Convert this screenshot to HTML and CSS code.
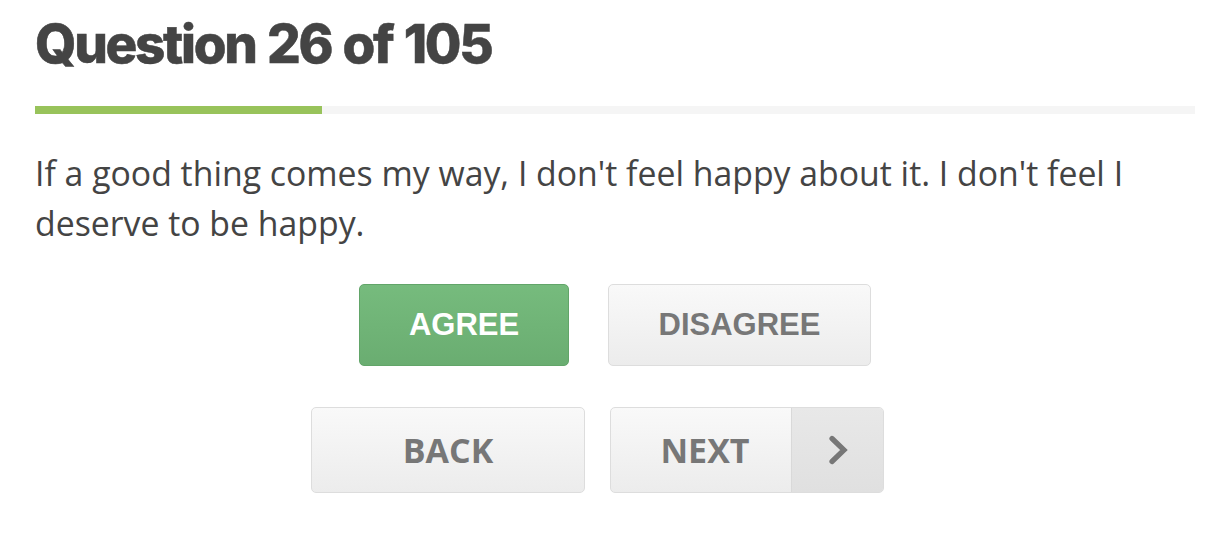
FILE: index.html
```html
<!DOCTYPE html>
<html lang="en">
<head>
<meta charset="utf-8">
<title>Question 26 of 105</title>
<link rel="stylesheet" href="styles.css">
</head>
<body>
<main class="quiz">
  <h1 class="quiz-title">Question 26 of 105</h1>
  <div class="progress"><div class="progress-fill" style="width: 24.7%"></div></div>
  <p class="question">If a good thing comes my way, I don't feel happy about it. I don't feel I deserve to be happy.</p>
  <div class="answers">
    <button class="btn btn-answer btn-agree">AGREE</button>
    <button class="btn btn-answer btn-disagree">DISAGREE</button>
  </div>
  <div class="nav">
    <button class="btn btn-nav btn-back">BACK</button>
    <button class="btn btn-nav btn-next">
      <span class="next-label">NEXT</span>
      <span class="next-icon">
        <svg width="24" height="30" viewBox="0 0 24 30" aria-hidden="true">
          <path d="M6 3.5 L18 15 L6 26.5" fill="none" stroke="#777" stroke-width="5.2" stroke-linecap="round" stroke-linejoin="miter"/>
        </svg>
      </span>
    </button>
  </div>
</main>
</body>
</html>
```

FILE: styles.css
```css
* { box-sizing: border-box; }

body {
  margin: 0;
  background: #ffffff;
  font-family: "Open Sans", "Liberation Sans", sans-serif;
  color: #454545;
}

.quiz {
  width: 1195px;
  padding-left: 35px;
  padding-top: 17px;
}

.quiz-title {
  margin: 0;
  font-family: "Inter", "Liberation Sans", sans-serif;
  font-weight: 800;
  font-size: 53px;
  line-height: 54px;
  letter-spacing: -2.3px;
  word-spacing: 2px;
  color: #444444;
  -webkit-text-stroke: 0.5px #444444;
}

.progress {
  margin-top: 35px;
  height: 8px;
  background: #f5f5f5;
}

.progress-fill {
  height: 100%;
  background: #98c35b;
}

.question {
  margin: 34px 0 0;
  font-size: 33.8px;
  line-height: 50px;
  color: #444444;
}

.answers {
  margin-top: 36px;
  display: flex;
  justify-content: center;
  gap: 39px;
}

.btn {
  border-radius: 5px;
  padding: 0;
  cursor: pointer;
  display: flex;
  align-items: center;
  justify-content: center;
}

.btn-answer {
  height: 82px;
  font-family: "Liberation Sans", Arial, sans-serif;
  font-weight: 700;
  font-size: 31px;
}

.btn-agree {
  width: 210px;
  background: linear-gradient(#76bb7d, #6aad71);
  border: 1px solid #62a569;
  color: #ffffff;
}

.btn-disagree {
  width: 263px;
  background: linear-gradient(#f9f9f9, #ececec);
  border: 1px solid #dddddd;
  color: #777777;
}

.nav {
  margin-top: 41px;
  display: flex;
  justify-content: center;
  gap: 25px;
  padding-right: 35px;
}

.btn-nav {
  height: 86px;
  width: 274px;
  background: linear-gradient(#f9f9f9, #ececec);
  border: 1px solid #dddddd;
  color: #777777;
  font-family: "Open Sans", "Liberation Sans", sans-serif;
  font-weight: 700;
  font-size: 34px;
}

.btn-next {
  justify-content: stretch;
  overflow: hidden;
}

.next-label {
  flex: 1;
  padding-left: 8px;
  display: flex;
  align-items: center;
  justify-content: center;
  height: 100%;
}

.next-icon {
  width: 92px;
  height: 100%;
  border-left: 1px solid #d9d9d9;
  background: linear-gradient(#e8e8e8, #e0e0e0);
  display: flex;
  align-items: center;
  justify-content: center;
}
```
